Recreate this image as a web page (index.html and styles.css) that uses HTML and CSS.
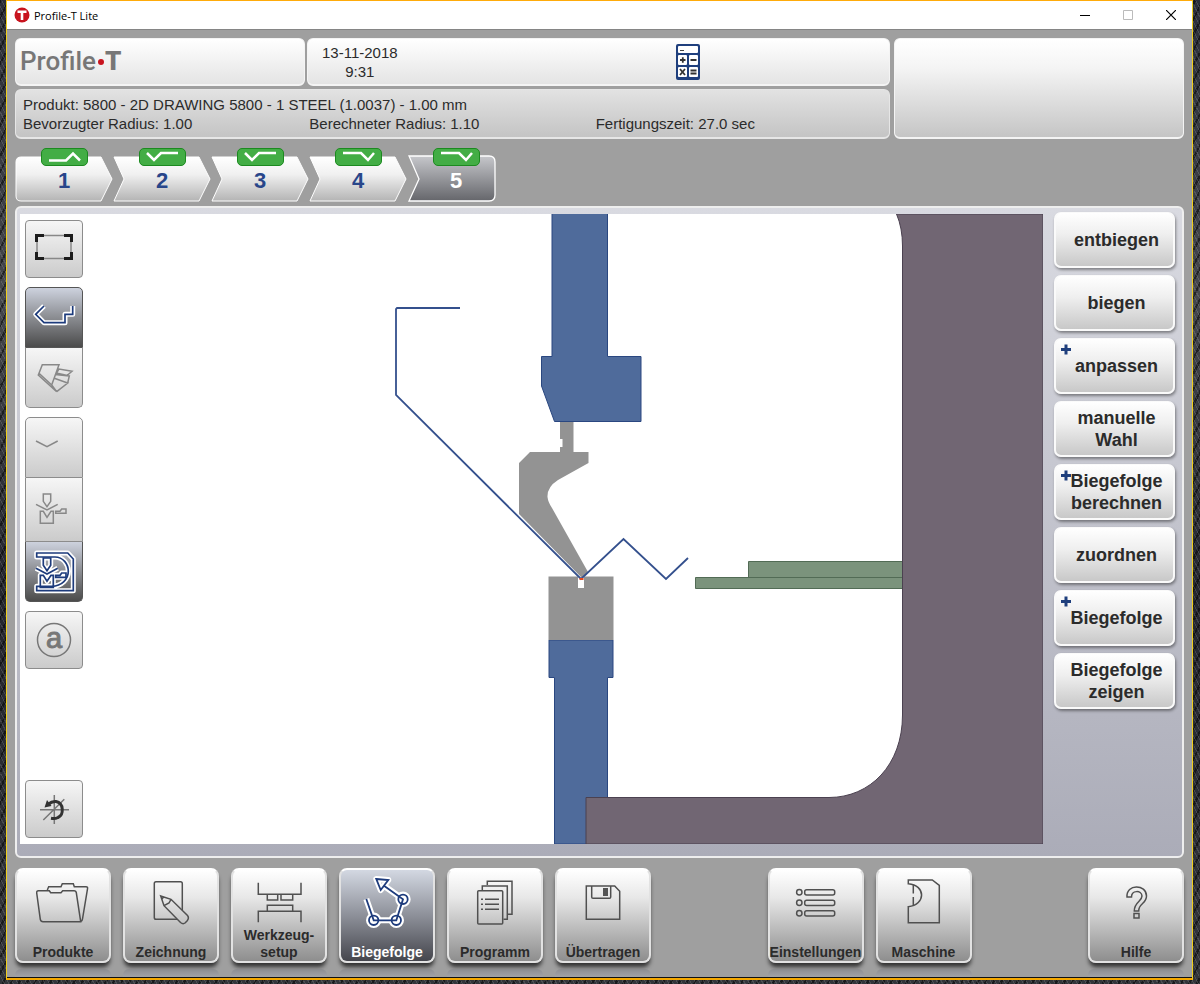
FILE: index.html
```html
<!DOCTYPE html>
<html lang="de">
<head>
  <meta charset="UTF-8" />
  <meta name="viewport" content="width=device-width, initial-scale=1.0"/>
  <title>Profile-T Lite</title>
  <link rel="stylesheet" href="styles.css">
</head>
<body>
  <!-- shared gradients and symbols -->
  <svg class="defs" aria-hidden="true">
    <defs>
      <linearGradient id="step-light" x1="0" y1="0" x2="0" y2="1">
        <stop offset="0" stop-color="#ffffff"/>
        <stop offset="0.4" stop-color="#f0f0f0"/>
        <stop offset="1" stop-color="#b4b4b4"/>
      </linearGradient>
      <linearGradient id="step-dark" x1="0" y1="0" x2="0" y2="1">
        <stop offset="0" stop-color="#c6c7cb"/>
        <stop offset="1" stop-color="#65666b"/>
      </linearGradient>
    </defs>
    <symbol id="step-first" viewBox="0 0 98 54">
      <path d="M6 9H86L97 31L86 53H6Q1 53 1 48V14Q1 9 6 9Z" fill="url(#step-light)" stroke="#fff"/>
    </symbol>
    <symbol id="step-mid" viewBox="0 0 98 54">
      <path d="M1 9H86L97 31L86 53H1L11 31Z" fill="url(#step-light)" stroke="#fff"/>
    </symbol>
    <symbol id="step-last" viewBox="0 0 98 54">
      <path d="M2 8H82Q88 8 88 14V47Q88 53 82 53H2L12 31Z" fill="url(#step-dark)" stroke="#fff" stroke-width="1.300"/>
    </symbol>
    <symbol id="tools" viewBox="0 0 58 60">
      <path d="M18.3 17H25.7V24.3L22 29.7L18.3 24.3ZM11 27.3L22 33L32.7 27.3M15.3 34.3V46.3H28.3V34.3H26L22 40.3L18.3 34.3ZM30.7 34.3H35L36.7 32H41V36.3H30.7Z"/>
    </symbol>
    <symbol id="machine" viewBox="0 0 58 60">
      <path d="M11.7 12H42.7L48.3 18V49.7H11.7V45.3H26.7C37 45 43.3 38 43.3 30.3C43.3 23 38 16 30 16H11.7Z"/>
    </symbol>
    <symbol id="profile" viewBox="0 0 58 60">
      <path d="M19 19L10.7 27.3L19 35.7H40V27.3H47.7V19"/>
    </symbol>
    <symbol id="robot" viewBox="2 2 92 55" overflow="visible">
      <path d="M37.3 11L49.3 12L41.7 22ZM45 17.7L64 31.3L57.3 52.3H34.7L27.3 31"/>
      <circle cx="64" cy="31.3" r="4.7"/><circle cx="57.3" cy="52.3" r="4.7"/><circle cx="34.7" cy="52.3" r="4.7"/>
    </symbol>
  </svg>

  <div class="window">
    <header class="titlebar">
      <svg class="app-icon" viewBox="0 0 16 16" aria-hidden="true">
        <circle cx="8" cy="8" r="7.5" fill="#c8141e"/>
        <path d="M3.5 3.5H12.5V6H9.3V13H6.7V6H3.5Z" fill="#fff"/>
      </svg>
      <h1>Profile-T Lite</h1>
      <button type="button" aria-label="Minimieren"><svg viewBox="0 0 10 10"><path d="M0 5.5H10" stroke="#000"/></svg></button>
      <button type="button" aria-label="Maximieren" disabled><svg viewBox="0 0 10 10"><path d="M.5 .5H9.5V9.5H.5Z" stroke="#bbb"/></svg></button>
      <button type="button" aria-label="Schließen"><svg viewBox="0 0 10 10"><path d="M0 0L10 10M10 0L0 10" stroke="#000" stroke-width="1.2"/></svg></button>
    </header>

    <div class="content">
      <section class="status">
        <div class="status-left">
          <div class="box logo"><span>Profile</span><i></i><b>T</b></div>
          <div class="box clock">
            <p>13-11-2018<br>9:31</p>
            <button type="button" class="calculator" aria-label="Rechner">
              <svg viewBox="0 0 24 36">
                <rect width="24" height="36" rx="2" fill="#1f3f7d"/>
                <rect x="2" y="2" width="20" height="7" rx="1" fill="#fff"/>
                <rect x="2" y="11" width="9" height="10" rx="1" fill="#fff"/><rect x="13" y="11" width="9" height="10" rx="1" fill="#fff"/>
                <rect x="2" y="23" width="9" height="10" rx="1" fill="#fff"/><rect x="13" y="23" width="9" height="10" rx="1" fill="#fff"/>
                <path d="M4 6.500H8" stroke="#444"/>
                <path d="M4 16H9.500M6.800 13.200V18.800M14.500 16H20.500M4 25L9 31M9 25L4 31M14.500 26.500H20.500M14.500 29.500H20.500" stroke="#333" stroke-width="1.800"/>
              </svg>
            </button>
          </div>
          <div class="box product">
            <p class="product-name">Produkt: 5800 - 2D DRAWING 5800 - 1 STEEL (1.0037) - 1.00 mm</p>
            <p>Bevorzugter Radius: 1.00</p>
            <p>Berechneter Radius: 1.10</p>
            <p>Fertigungszeit: 27.0 sec</p>
          </div>
        </div>
        <div class="box message"></div>
      </section>

      <nav class="steps" aria-label="Biegungen">
        <button type="button">
          <svg class="shape"><use href="#step-first"/></svg>
          <svg class="bend" viewBox="1 1 45 16"><path d="M8 12.500H25L32 5.500L39 12.500"/></svg>
          <span>1</span>
        </button>
        <button type="button">
          <svg class="shape"><use href="#step-mid"/></svg>
          <svg class="bend" viewBox="1 1 45 16"><path d="M8 5L15 12L22 5H39"/></svg>
          <span>2</span>
        </button>
        <button type="button">
          <svg class="shape"><use href="#step-mid"/></svg>
          <svg class="bend" viewBox="1 1 45 16"><path d="M8 5L15 12L22 5H39"/></svg>
          <span>3</span>
        </button>
        <button type="button">
          <svg class="shape"><use href="#step-mid"/></svg>
          <svg class="bend" viewBox="1 1 45 16"><path d="M8 5H26L33 12L39 5"/></svg>
          <span>4</span>
        </button>
        <button type="button" class="active" aria-current="step">
          <svg class="shape"><use href="#step-last"/></svg>
          <svg class="bend" viewBox="1 1 45 16"><path d="M8 5H26L33 12L39 5"/></svg>
          <span>5</span>
        </button>
      </nav>

      <main class="panel">
        <div class="canvas">
          <svg class="drawing" viewBox="20 214 1023 630" role="img" aria-label="Biegesimulation">
            <!-- upper beam and clamp -->
            <path class="beam" d="M552 214V356.500H541.500V386L554.500 421.500H641V356.500H607.500V214"/>
            <!-- lower beam -->
            <path class="beam" d="M549 640H613V677.500H607.500V844H554.500V677.500H549Z"/>
            <!-- punch -->
            <path class="tool" d="M560 422H573.500V452H588.500V463L558 480Q547 487 547.500 497Q548 502 552 508L588 572L582 578L519 514V463L530 452H560V447H562.500V439H560Z"/>
            <!-- die -->
            <path class="tool" d="M548.500 576.500H578V588H584V576.500H613.500V640H548.500Z"/>
            <!-- back gauge -->
            <path class="gauge" d="M748.500 561.500H903V577.500H748.500ZM695.500 577.500H903V588.500H695.500Z"/>
            <!-- side frame -->
            <path class="frame" d="M896.500 214Q902.500 228 902.500 246V715C902.500 765 870 797.500 829 797.500H586V844H1043V214Z"/>
            <!-- sheet -->
            <path class="sheet" d="M460 308H397L396 309V395L581 579L623.500 539L666 579L688 558"/>
            <path d="M579.500 579H583.500" stroke="#e5481f" stroke-width="2"/>
          </svg>

          <div class="toolbar">
            <button type="button" aria-label="Zoom Alles">
              <svg viewBox="0 0 58 58"><path d="M12 15.500H46V38.500H12Z" stroke="#888"/><path d="M11.500 22V15.500H19M39 15.500H46.500V22M46.500 32V38.500H39M19 38.500H11.500V32" stroke="#1c1c1c" stroke-width="3"/></svg>
            </button>
            <div class="group">
              <button type="button" class="active" aria-label="Profil">
                <svg viewBox="0 0 58 60"><use href="#profile" class="halo"/><use href="#profile" class="line"/></svg>
              </button>
              <button type="button" aria-label="3D-Ansicht">
                <svg viewBox="0 0 58 60"><path d="M17.300 17.700H34L26.700 38L14 26.300ZM14 26.300L13.300 28L31.700 44.700L26.700 38M31.700 44.700L42.700 36L29.300 31.300M42.700 36L44.300 29L30 27.500M44.300 29L31.500 26M42 28.500L47 24.300L34 22L32 25.500"/></svg>
              </button>
            </div>
            <div class="group">
              <button type="button" aria-label="Blech">
                <svg viewBox="0 0 58 60"><path d="M11 24L22 29.700L32.700 24"/></svg>
              </button>
              <button type="button" class="tall" aria-label="Werkzeuge">
                <svg viewBox="0 0 58 60"><use href="#tools"/></svg>
              </button>
              <button type="button" class="active" aria-label="Maschine anzeigen">
                <svg viewBox="0 0 58 60"><g class="halo"><use href="#machine"/><use href="#tools"/></g><g class="line"><use href="#machine"/><use href="#tools"/></g></svg>
              </button>
            </div>
            <button type="button" aria-label="Automatik">
              <svg viewBox="0 0 58 58"><circle cx="29" cy="29" r="16.500" stroke="#777" stroke-width="1.500"/><text x="29" y="37" text-anchor="middle">a</text></svg>
            </button>
            <button type="button" class="rotate" aria-label="Drehen">
              <svg viewBox="0 0 58 58"><path d="M15 29.700H44M29.300 15V44M18.300 40L39.300 19.300" stroke="#777" stroke-width="1.500"/><path d="M23 24.500Q27 21 31 21.500C39 23 39 35 33 37.500Q30 39 26 38.300" stroke="#333" stroke-width="3"/><path d="M22 20L26.500 26L19.500 27.500Z" fill="#333" stroke="none"/></svg>
            </button>
          </div>
        </div>

        <div class="actions">
          <button type="button">entbiegen</button>
          <button type="button">biegen</button>
          <button type="button" class="more">anpassen</button>
          <button type="button">manuelle<br>Wahl</button>
          <button type="button" class="more">Biegefolge<br>berechnen</button>
          <button type="button">zuordnen</button>
          <button type="button" class="more">Biegefolge</button>
          <button type="button">Biegefolge<br>zeigen</button>
        </div>
      </main>

      <nav class="menu" aria-label="Hauptmenü">
        <div class="menu-group">
          <button type="button">
            <svg viewBox="2 2 92 55"><path d="M23.500 22.700H34.300L35.700 24.700H46L47.700 22.700H59Q61 22.700 61.300 24.700L65.700 53.700H28Q25.800 53.700 25.300 51.300L21.700 25Q21.500 22.700 23.500 22.700ZM32.300 22L33.700 18.700H46L47.300 15.700H58.300L59.300 18.700H71Q73 18.700 72.500 21L67.500 51Q67 53.700 65 53.700"/></svg>
            <span>Produkte</span>
          </button>
          <button type="button">
            <svg viewBox="2 2 92 55"><path d="M54 51.300H33Q31.300 51.300 31.300 49.500V15.500Q31.300 13.700 33 13.700H57.500Q59.300 13.700 59.300 15.500V42"/><path d="M37.700 28L48 31.300L64.500 47.500Q66.500 50 64 53L62 55Q60 56.500 57.500 54.500L41 37.700ZM48 31.300L46 35L41 37.700M39 31L40.500 29"/></svg>
            <span>Zeichnung</span>
          </button>
          <button type="button">
            <svg viewBox="2 2 92 55"><path d="M27.300 14.700V26.300H70V14.700M36.300 26.300V32H46.700V26.300M50 26.300V32H61.700V26.300M36.300 43.300V37.300H61.700V43.300M27.300 54.300V43.300H70V54.300"/></svg>
            <span>Werkzeug-<br>setup</span>
          </button>
          <button type="button" class="active" aria-current="page">
            <svg viewBox="2 2 92 55"><use href="#robot" x="2" y="2" width="92" height="55" class="halo"/><use href="#robot" x="2" y="2" width="92" height="55" class="line"/></svg>
            <span>Biegefolge</span>
          </button>
          <button type="button">
            <svg viewBox="2 2 92 55"><rect x="30.700" y="22.700" width="25" height="33.300" rx="1"/><path d="M35.300 22V18H60.300V51.300H56.500M40.300 17V13.300H65V46.300H61M34 31.300H36M38 31.300H52M34 36.300H36M38 36.300H52M34 41.300H36M38 41.300H52"/></svg>
            <span>Programm</span>
          </button>
          <button type="button">
            <svg viewBox="2 2 92 55"><path d="M31.300 18H59.700L64.700 23.300V51.300H31.300ZM36.700 18V29Q36.700 30.300 38 30.300H54.500Q55.700 30.300 55.700 29V18"/><rect x="48" y="20" width="5" height="8" fill="#555" stroke="none"/></svg>
            <span>Übertragen</span>
          </button>
        </div>
        <div class="menu-group">
          <button type="button">
            <svg viewBox="2 2 92 55"><circle cx="31.300" cy="24.300" r="2.700"/><circle cx="31.300" cy="34.700" r="2.700"/><circle cx="31.300" cy="45.300" r="2.700"/><rect x="36.700" y="21.700" width="30" height="5.300" rx="2"/><rect x="36.700" y="32.200" width="30" height="5.300" rx="2"/><rect x="36.700" y="42.700" width="30" height="5.300" rx="2"/></svg>
            <span>Einstellungen</span>
          </button>
          <button type="button">
            <svg viewBox="2 2 92 55"><path d="M32.300 12H56.300L63.300 17.300V54.700H32.300V38.700C50 37 50 17 32.300 15.700ZM37.300 17V25.500M37.300 29V37"/></svg>
            <span>Maschine</span>
          </button>
        </div>
        <button type="button">
          <svg viewBox="2 2 92 55"><path d="M39 29C38 15.500 58.500 16 58.500 28C58.500 36 50.500 35 50.700 43H46.300C46 34 54 33.500 54 28C53.500 22 43.500 22 43.500 29ZM46 45.500H51V50H46Z"/></svg>
          <span>Hilfe</span>
        </button>
      </nav>
    </div>
  </div>
</body>
</html>
```

FILE: styles.css
```css
* {
  box-sizing: border-box;
}
body {
  margin: 0;
  padding: 0 7px 5px 6px;
  min-height: 100vh;
  display: flex;
  font-family: "Liberation Sans", Arial, sans-serif;
  color: #2b2b2b;
  background:
    repeating-linear-gradient(63deg, rgba(255, 255, 255, 0.13) 0 1px, transparent 1px 4px),
    repeating-linear-gradient(117deg, rgba(0, 0, 0, 0.5) 0 2px, transparent 2px 7px),
    linear-gradient(#2b2e38, #45474c 30%, #24262e 60%, #33353a);
}
p, h1 {
  margin: 0;
}
button {
  font-family: inherit;
  color: inherit;
  padding: 0;
  border: none;
  background: none;
  cursor: pointer;
}
svg {
  display: block;
  fill: none;
}
.defs {
  position: absolute;
  width: 0;
  height: 0;
}
.halo {
  stroke: #fff;
  stroke-width: 6;
  stroke-linejoin: round;
}
.line {
  stroke: #1d3b7c;
  stroke-width: 2;
}

/* window */
.window {
  flex: 1;
  min-width: 0;
  display: flex;
  flex-direction: column;
  background: #9f9f9f;
  border: 1px solid #f0cf1c;
  border-top-color: #ffab0a;
  border-bottom: 2px solid #f5a800;
}
.titlebar {
  display: flex;
  align-items: center;
  height: 28px;
  padding-left: 7px;
  background: #fff;
}
.app-icon {
  width: 16px;
  height: 16px;
  margin-right: 4px;
}
.titlebar h1 {
  flex: 1;
  font: 11px "Open Sans", sans-serif;
  color: #000;
}
.titlebar button {
  width: 43px;
  height: 28px;
}
.titlebar button svg {
  width: 10px;
  height: 10px;
  margin: auto;
}
.content {
  flex: 1;
  display: flex;
  flex-direction: column;
  padding: 8px 8px 14px;
  border-top: 1px solid #858585;
  border-bottom: 1px solid #111;
}

/* status boxes */
.status {
  display: grid;
  grid-template-columns: 1fr 290px;
  gap: 4px;
}
.status-left {
  display: grid;
  grid-template-columns: 290px 1fr;
  grid-template-rows: 48px 50px;
  gap: 3px 2px;
  font-size: 15px;
  line-height: 19px;
}
.box {
  border: 1px solid #f4f4f4;
  border-bottom-width: 2px;
  border-radius: 6px;
  background: linear-gradient(#fff, #e4e4e4);
}
.logo {
  display: flex;
  align-items: center;
  padding-left: 4px;
  font-family: Roboto, sans-serif;
  font-size: 26px;
  color: #777;
}
.logo span {
  font-weight: 500;
}
.logo b {
  font-weight: 900;
}
.logo i {
  width: 6px;
  height: 6px;
  margin: 0 1px 0 2px;
  border-radius: 50%;
  background: #c8141e;
}
.clock {
  display: flex;
  align-items: center;
  justify-content: space-between;
  padding: 0 189px 0 14px;
  text-align: center;
}
.calculator svg {
  width: 24px;
  height: 36px;
}
.product {
  grid-column: 1 / -1;
  display: grid;
  grid-template-columns: repeat(3, 1fr);
  align-content: center;
  padding: 0 7px;
  background: linear-gradient(#e2e2e2, #c4c4c4);
  border-color: #e6e6e6;
}
.product-name {
  grid-column: 1 / -1;
}
.message {
  background: linear-gradient(#fff, #f4f4f4 30%, #c5c5c5);
}

/* bend steps */
.steps {
  display: flex;
  margin: 9px 0 4px;
}
.steps button {
  display: grid;
  justify-items: center;
  width: 98px;
  height: 54px;
  font-size: 22px;
  font-weight: bold;
  line-height: 24px;
  color: #28468a;
}
.steps button > * {
  grid-area: 1 / 1;
}
.steps .shape {
  width: 98px;
  height: 54px;
}
.steps .bend {
  align-self: start;
  width: 47px;
  height: 18px;
  border: 1px solid #1c8a20;
  border-radius: 5px;
  background: #43ad45;
  stroke: #fff;
  stroke-width: 2.5;
}
.steps span {
  align-self: end;
  margin-bottom: 9px;
}
.steps .active {
  color: #fff;
}

/* main panel */
.panel {
  flex: 1;
  display: grid;
  grid-template-columns: 1fr 121px;
  gap: 11px;
  padding: 4px 7px 12px 3px;
  border: 2px solid #eee;
  border-radius: 6px;
  background: linear-gradient(#d9dae1, #abacb8);
}
.canvas {
  display: grid;
  margin-top: 2px;
  background: #fff;
}
.canvas > * {
  grid-area: 1 / 1;
}
.drawing {
  width: 100%;
  height: 100%;
}
.beam {
  fill: #4f6b9b;
  stroke: #2a4780;
}
.tool {
  fill: #939393;
}
.gauge {
  fill: #7b937c;
  stroke: #526b55;
}
.frame {
  fill: #716673;
  stroke: #4b4150;
}
.sheet {
  stroke: #34508d;
  stroke-width: 1.8;
}
.toolbar {
  display: flex;
  flex-direction: column;
  gap: 9px;
  width: 58px;
  margin: 6px 5px;
  z-index: 1;
}
.toolbar button {
  display: flex;
  align-items: flex-start;
  width: 58px;
  height: 58px;
  overflow: hidden;
  border: 1px solid #8c8c8c;
  border-radius: 4px;
  background: linear-gradient(#f6f6f6, #cbcbcb);
}
.toolbar button svg {
  flex: none;
  width: 58px;
  height: 58px;
  margin: -1px;
  stroke: #888;
  stroke-width: 1.5;
}
.toolbar .group button {
  height: 61px;
  border-radius: 0;
}
.toolbar .group button + button {
  height: 60px;
  border-top: none;
}
.toolbar .group .tall.tall {
  height: 64px;
}
.toolbar .group button svg {
  height: 60px;
}
.toolbar .group button:first-child {
  border-radius: 5px 5px 0 0;
}
.toolbar .group button:last-child {
  border-radius: 0 0 5px 5px;
}
.toolbar .active {
  background: linear-gradient(#cdd2de, #8b8d92 50%, #4b4b4b);
  border-color: #555;
}
.toolbar .halo {
  stroke-width: 5;
}
.toolbar .line {
  stroke-width: 1.7;
}
.toolbar text {
  font-size: 29px;
  fill: #777;
  stroke: #777;
  stroke-width: 1;
}
.toolbar .rotate {
  margin-top: auto;
}

/* actions on the right */
.actions {
  display: flex;
  flex-direction: column;
  gap: 7px;
}
.actions button {
  position: relative;
  height: 56px;
  padding-left: 4px;
  font-size: 18px;
  font-weight: bold;
  line-height: 22px;
  border: 2px solid #fafafa;
  border-top-width: 1px;
  border-radius: 7px;
  background: linear-gradient(#fff, #efefef 40%, #c8c8c8);
  box-shadow: 1px 2px 3px rgba(0, 0, 0, 0.4);
}
.actions .more::before,
.actions .more::after {
  content: "";
  position: absolute;
  left: 5px;
  top: 9px;
  width: 10px;
  height: 3px;
  background: #1f3f7d;
}
.actions .more::after {
  transform: rotate(90deg);
}

/* bottom menu */
.menu {
  display: flex;
  justify-content: space-between;
  margin-top: 10px;
}
.menu-group {
  display: flex;
  gap: 12px;
}
.menu button {
  position: relative;
  display: flex;
  flex-direction: column;
  justify-content: space-between;
  width: 96px;
  height: 95px;
  font-size: 14px;
  font-weight: bold;
  line-height: 17px;
  text-align: center;
  border: 2px solid #e2e2e2;
  border-top-color: #fff;
  border-radius: 8px;
  background: linear-gradient(#fff, #e8e8e8 30%, #8e8e8e);
  box-shadow: 0 5px 4px -1px #333;
}
.menu button::after {
  content: "";
  position: absolute;
  left: -2px;
  right: -2px;
  top: 99px;
  height: 8px;
  border-radius: 6px 6px 0 0;
  background: linear-gradient(#85868b, #a3a4aa);
  opacity: 0.7;
}
.menu svg {
  width: 92px;
  height: 55px;
  overflow: visible;
  stroke: #505050;
  stroke-width: 1.5;
}
.menu span {
  width: 100%;
}
.menu .active {
  color: #fff;
  background: linear-gradient(#d3d8e2, #8d9099 50%, #45464d);
}
.menu .halo {
  stroke-width: 6;
}
.menu .line {
  stroke-width: 1.8;
}
```
